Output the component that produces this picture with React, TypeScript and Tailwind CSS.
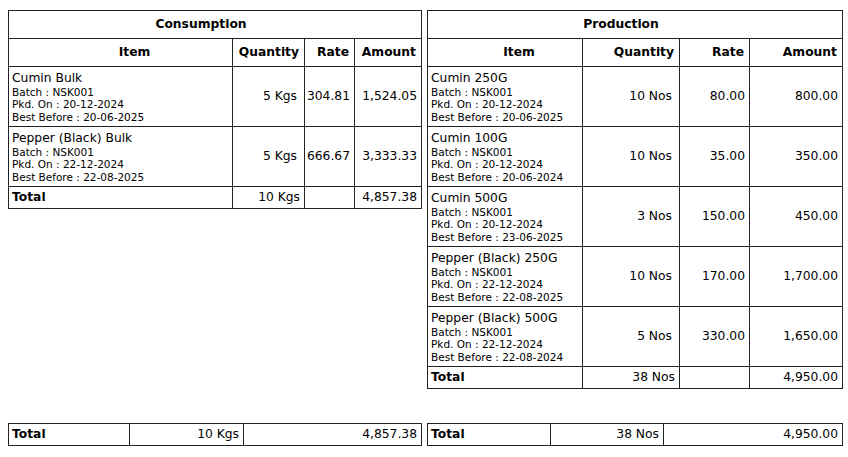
const consumption = [
  { name: 'Cumin Bulk', batch: 'NSK001', pkd: '20-12-2024', best: '20-06-2025', qty: '5 Kgs', rate: '304.81', amount: '1,524.05' },
  { name: 'Pepper (Black) Bulk', batch: 'NSK001', pkd: '22-12-2024', best: '22-08-2025', qty: '5 Kgs', rate: '666.67', amount: '3,333.33' },
];

const production = [
  { name: 'Cumin 250G', batch: 'NSK001', pkd: '20-12-2024', best: '20-06-2025', qty: '10 Nos', rate: '80.00', amount: '800.00' },
  { name: 'Cumin 100G', batch: 'NSK001', pkd: '20-12-2024', best: '20-06-2024', qty: '10 Nos', rate: '35.00', amount: '350.00' },
  { name: 'Cumin 500G', batch: 'NSK001', pkd: '20-12-2024', best: '23-06-2025', qty: '3 Nos', rate: '150.00', amount: '450.00' },
  { name: 'Pepper (Black) 250G', batch: 'NSK001', pkd: '22-12-2024', best: '22-08-2025', qty: '10 Nos', rate: '170.00', amount: '1,700.00' },
  { name: 'Pepper (Black) 500G', batch: 'NSK001', pkd: '22-12-2024', best: '22-08-2024', qty: '5 Nos', rate: '330.00', amount: '1,650.00' },
];

type Row = (typeof consumption)[number];

const cell = 'border border-[#222] align-middle';

function ItemTable({ title, rows, widths, total }: { title: string; rows: Row[]; widths: string[]; total: { qty: string; amount: string } }) {
  return (
    <table className="border-collapse table-fixed text-black">
      <colgroup>
        {widths.map((w, i) => (
          <col key={i} className={w} />
        ))}
      </colgroup>
      <thead>
        <tr className="h-[28px]">
          <th colSpan={4} className={`${cell} text-center font-bold text-[12.3px] pr-[28px]`}>
            {title}
          </th>
        </tr>
        <tr className="h-[28px] text-[12.3px] font-bold">
          <th className={`${cell} text-center pl-[28px]`}>Item</th>
          <th className={`${cell} text-right pr-[5px]`}>Quantity</th>
          <th className={`${cell} text-right pr-[5px]`}>Rate</th>
          <th className={`${cell} text-right pr-[5px]`}>Amount</th>
        </tr>
      </thead>
      <tbody>
        {rows.map((r) => (
          <tr key={r.name} className="h-[60px] text-[12.3px]">
            <td className={`${cell} align-top pl-[3px] pt-[4px]`}>
              <div className="leading-[15px]">{r.name}</div>
              <div className="text-[10.5px] leading-[12.3px]">
                <div>Batch : {r.batch}</div>
                <div>Pkd. On : {r.pkd}</div>
                <div>Best Before : {r.best}</div>
              </div>
            </td>
            <td className={`${cell} text-right pr-[7px]`}>{r.qty}</td>
            <td className={`${cell} text-right pr-[4px]`}>{r.rate}</td>
            <td className={`${cell} text-right pr-[4px]`}>{r.amount}</td>
          </tr>
        ))}
        <tr className="h-[22px] text-[12.3px]">
          <td className={`${cell} pl-[3px] font-bold`}>Total</td>
          <td className={`${cell} text-right pr-[4px]`}>{total.qty}</td>
          <td className={cell}></td>
          <td className={`${cell} text-right pr-[4px]`}>{total.amount}</td>
        </tr>
      </tbody>
    </table>
  );
}

function TotalTable({ widths, qty, amount }: { widths: string[]; qty: string; amount: string }) {
  return (
    <table className="border-collapse table-fixed text-black text-[12.3px]">
      <colgroup>
        {widths.map((w, i) => (
          <col key={i} className={w} />
        ))}
      </colgroup>
      <tbody>
        <tr className="h-[22px]">
          <td className={`${cell} pl-[3px] font-bold`}>Total</td>
          <td className={`${cell} text-right pr-[4px]`}>{qty}</td>
          <td className={`${cell} text-right pr-[4px]`}>{amount}</td>
        </tr>
      </tbody>
    </table>
  );
}

export default function App() {
  return (
    <div className="w-[848px] h-[457px] bg-white font-['DejaVu_Sans',sans-serif] pl-[8px] pt-[10px] flex flex-col gap-[34px]">
      <div className="flex items-start gap-[5px]">
        <ItemTable
          title="Consumption"
          rows={consumption}
          widths={['w-[224px]', 'w-[72px]', 'w-[50px]', 'w-[67px]']}
          total={{ qty: '10 Kgs', amount: '4,857.38' }}
        />
        <ItemTable
          title="Production"
          rows={production}
          widths={['w-[155px]', 'w-[97px]', 'w-[70px]', 'w-[93px]']}
          total={{ qty: '38 Nos', amount: '4,950.00' }}
        />
      </div>
      <div className="flex items-start gap-[5px]">
        <TotalTable widths={['w-[121px]', 'w-[114px]', 'w-[178px]']} qty="10 Kgs" amount="4,857.38" />
        <TotalTable widths={['w-[123px]', 'w-[113px]', 'w-[179px]']} qty="38 Nos" amount="4,950.00" />
      </div>
    </div>
  );
}
